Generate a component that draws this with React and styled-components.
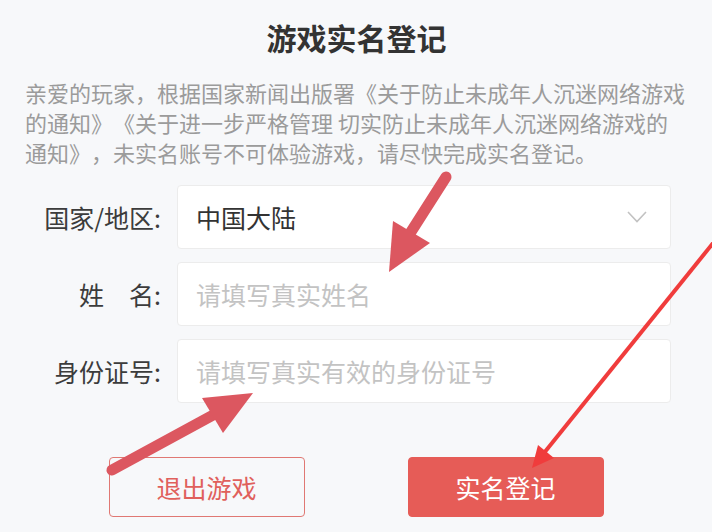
import React from "react";
import styled, { createGlobalStyle } from "styled-components";

const Global = createGlobalStyle`
  html, body { margin: 0; padding: 0; background: #f7f8fa; }
  body { font-family: "Noto Sans CJK SC", "Noto Sans", sans-serif; text-spacing-trim: space-all; }
  * { box-sizing: border-box; }
`;

const Page = styled.div`
  position: relative;
  width: 712px;
  height: 532px;
  overflow: hidden;
  background: #f7f8fa;
  padding: 17px 24px 0 25px;
`;

const Title = styled.h1`
  margin: 0;
  text-align: center;
  font-size: 30px;
  line-height: 40px;
  font-weight: 700;
  color: #333333;
`;

const Notice = styled.p`
  margin: 20px 0 0;
  font-size: 22px;
  line-height: 30px;
  color: #9b9b9b;
  white-space: nowrap;
  text-spacing-trim: space-all;
`;

const Form = styled.div`
  margin: 18px 17px 0 0;
  display: grid;
  grid-template-columns: 136px 1fr;
  column-gap: 16px;
  row-gap: 13px;
`;

const Label = styled.div`
  display: flex;
  align-items: center;
  justify-content: flex-end;
  font-size: 25px;
  color: #3c3c3c;
  white-space: pre;
`;

const Field = styled.div`
  height: 64px;
  display: flex;
  align-items: center;
  justify-content: space-between;
  padding: 0 23px 0 18px;
  background: #ffffff;
  border: 1px solid #ececec;
  border-radius: 4px;
  font-size: 25px;
  color: ${(p) => (p.$placeholder ? "#c3c3c3" : "#333333")};
`;

const Chevron = styled.svg`
  width: 20px;
  height: 12px;
  display: block;
`;

const Actions = styled.div`
  margin-top: 54px;
  display: flex;
  justify-content: center;
  gap: 103px;
  padding-right: 1px;
`;

const Button = styled.div`
  width: 196px;
  height: 60px;
  display: flex;
  align-items: center;
  justify-content: center;
  border-radius: 4px;
  font-size: 25px;
  border: 1px solid ${(p) => (p.$primary ? "#e65c57" : "#e07873")};
  background: ${(p) => (p.$primary ? "#e65c57" : "transparent")};
  color: ${(p) => (p.$primary ? "#ffffff" : "#e0605c")};
`;

const Overlay = styled.svg`
  position: absolute;
  left: 0;
  top: 0;
  width: 712px;
  height: 532px;
  pointer-events: none;
`;

export default function App() {
  return (
    <>
      <Global />
      <Page>
        <Title>游戏实名登记</Title>
        <Notice>
          亲爱的玩家，根据国家新闻出版署《关于防止未成年人沉迷网络游戏
          <br />
          的通知》《关于进一步严格管理 切实防止未成年人沉迷网络游戏的
          <br />
          通知》，未实名账号不可体验游戏，请尽快完成实名登记。
        </Notice>
        <Form>
          <Label>国家/地区:</Label>
          <Field>
            <span>中国大陆</span>
            <Chevron viewBox="0 0 20 12">
              <path d="M1 1 L10 10.5 L19 1" fill="none" stroke="#c2c2c2" strokeWidth="1.6" />
            </Chevron>
          </Field>
          <Label>{"姓　名:"}</Label>
          <Field $placeholder>请填写真实姓名</Field>
          <Label>身份证号:</Label>
          <Field $placeholder>请填写真实有效的身份证号</Field>
        </Form>
        <Actions>
          <Button>退出游戏</Button>
          <Button $primary>实名登记</Button>
        </Actions>
        <Overlay viewBox="0 0 712 532">
          <line x1="446" y1="177" x2="409" y2="235" stroke="#dc5760" strokeWidth="11" strokeLinecap="round" />
          <polygon points="389,272 393,221 430,243" fill="#dc5760" />
          <line x1="112" y1="470" x2="215" y2="414" stroke="#dc5760" strokeWidth="11" strokeLinecap="round" />
          <polygon points="253,393 202,398 223,433" fill="#dc5760" />
          <line x1="722" y1="232" x2="544" y2="453" stroke="#f03c3c" strokeWidth="4" />
          <polygon points="532,468 538,445 554,458" fill="#f03c3c" />
        </Overlay>
      </Page>
    </>
  );
}
